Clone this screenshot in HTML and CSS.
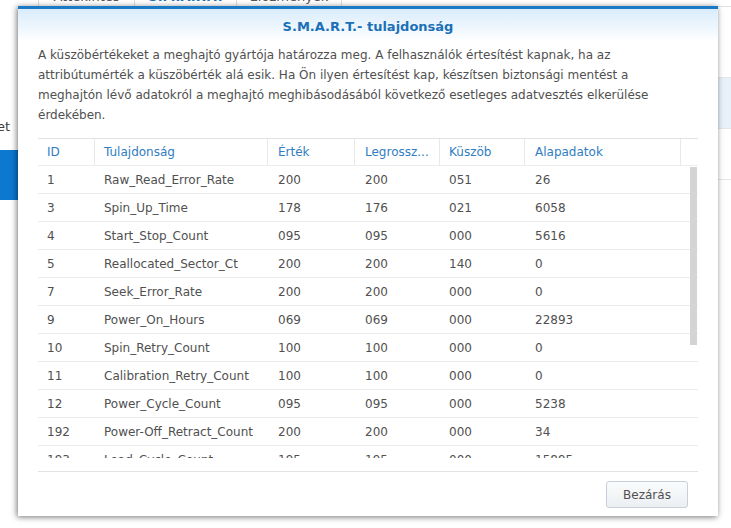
FILE: index.html
```html
<!DOCTYPE html>
<html lang="hu">

<head>
    <meta charset="UTF-8">
    <title>S.M.A.R.T.- tulajdonság</title>
    <link rel="stylesheet" href="styles.css">
</head>

<body>
    <div class="app">
        <div class="sidebar">
            <div class="side-item">Kötet</div>
            <div class="side-item selected"></div>
        </div>
        <div class="main">
            <div class="tabs">
                <div class="tab">Áttekintés</div>
                <div class="tab active">S.M.A.R.T.</div>
                <div class="tab">Előzmények</div>
            </div>
            <div class="list">
                <div class="list-row"></div>
                <div class="list-row hl"></div>
                <div class="list-row"></div>
            </div>
        </div>
    </div>

    <div class="dialog">
        <div class="dialog-head">S.M.A.R.T.- tulajdonság</div>
        <div class="dialog-body">
            <p class="intro">A küszöbértékeket a meghajtó gyártója határozza meg. A felhasználók értesítést kapnak, ha az
                attribútumérték a küszöbérték alá esik. Ha Ön ilyen értesítést kap, készítsen biztonsági mentést a
                meghajtón lévő adatokról a meghajtó meghibásodásából következő esetleges adatvesztés elkerülése
                érdekében.</p>

            <div class="grid">
                <div class="grid-row grid-head">
                    <div class="c c-id">ID</div>
                    <div class="c c-name">Tulajdonság</div>
                    <div class="c c-val">Érték</div>
                    <div class="c c-worst">Legrossz...</div>
                    <div class="c c-thr">Küszöb</div>
                    <div class="c c-raw">Alapadatok</div>
                    <div class="c c-gap"></div>
                </div>
                <div class="grid-body">
                    <div class="grid-row"><div class="c c-id">1</div><div class="c c-name">Raw_Read_Error_Rate</div><div class="c c-val">200</div><div class="c c-worst">200</div><div class="c c-thr">051</div><div class="c c-raw">26</div></div>
                    <div class="grid-row"><div class="c c-id">3</div><div class="c c-name">Spin_Up_Time</div><div class="c c-val">178</div><div class="c c-worst">176</div><div class="c c-thr">021</div><div class="c c-raw">6058</div></div>
                    <div class="grid-row"><div class="c c-id">4</div><div class="c c-name">Start_Stop_Count</div><div class="c c-val">095</div><div class="c c-worst">095</div><div class="c c-thr">000</div><div class="c c-raw">5616</div></div>
                    <div class="grid-row"><div class="c c-id">5</div><div class="c c-name">Reallocated_Sector_Ct</div><div class="c c-val">200</div><div class="c c-worst">200</div><div class="c c-thr">140</div><div class="c c-raw">0</div></div>
                    <div class="grid-row"><div class="c c-id">7</div><div class="c c-name">Seek_Error_Rate</div><div class="c c-val">200</div><div class="c c-worst">200</div><div class="c c-thr">000</div><div class="c c-raw">0</div></div>
                    <div class="grid-row"><div class="c c-id">9</div><div class="c c-name">Power_On_Hours</div><div class="c c-val">069</div><div class="c c-worst">069</div><div class="c c-thr">000</div><div class="c c-raw">22893</div></div>
                    <div class="grid-row"><div class="c c-id">10</div><div class="c c-name">Spin_Retry_Count</div><div class="c c-val">100</div><div class="c c-worst">100</div><div class="c c-thr">000</div><div class="c c-raw">0</div></div>
                    <div class="grid-row"><div class="c c-id">11</div><div class="c c-name">Calibration_Retry_Count</div><div class="c c-val">100</div><div class="c c-worst">100</div><div class="c c-thr">000</div><div class="c c-raw">0</div></div>
                    <div class="grid-row"><div class="c c-id">12</div><div class="c c-name">Power_Cycle_Count</div><div class="c c-val">095</div><div class="c c-worst">095</div><div class="c c-thr">000</div><div class="c c-raw">5238</div></div>
                    <div class="grid-row"><div class="c c-id">192</div><div class="c c-name">Power-Off_Retract_Count</div><div class="c c-val">200</div><div class="c c-worst">200</div><div class="c c-thr">000</div><div class="c c-raw">34</div></div>
                    <div class="grid-row"><div class="c c-id">193</div><div class="c c-name">Load_Cycle_Count</div><div class="c c-val">195</div><div class="c c-worst">195</div><div class="c c-thr">000</div><div class="c c-raw">15895</div></div>
                    <div class="grid-row"><div class="c c-id">194</div><div class="c c-name">Temperature_Celsius</div><div class="c c-val">114</div><div class="c c-worst">099</div><div class="c c-thr">000</div><div class="c c-raw">36</div></div>
                    <div class="scroll-thumb"></div>
                </div>
            </div>

            <div class="dialog-foot">
                <button type="button" class="close-button">Bezárás</button>
            </div>
        </div>
    </div>
</body>

</html>
```

FILE: styles.css
```css
body {
    margin: 0;
    font-family: "DejaVu Sans", Verdana, sans-serif;
    font-size: 12px;
    color: #505050;
    background-color: #fff;
    overflow: hidden;
}

/* application behind the dialog */

.app {
    display: flex;
    height: 528px;
}

.sidebar {
    width: 18px;
    padding-top: 117px;
    overflow: hidden;
    white-space: nowrap;
    direction: rtl;
}

.side-item {
    height: 20px;
    line-height: 20px;
    font-size: 13px;
    padding-right: 8px;
    color: #404040;
}

.side-item.selected {
    height: 50px;
    margin-top: 13px;
    background: #0c78d0;
}

.main {
    flex: 1;
    margin-top: -8px;
}

.tabs {
    display: flex;
    height: 14px;
    padding-left: 20px;
    border-bottom: 1px solid #e3e3e3;
}

.tab {
    width: 95px;
    text-align: center;
    border-left: 1px solid #dcdcdc;
    line-height: 10px;
    font-size: 13px;
    color: #555;
}

.tab.active {
    width: 101px;
    font-weight: bold;
    color: #1b6fb5;
}

.tab:last-child {
    width: 104px;
    border-right: 1px solid #dcdcdc;
}

.list {
    padding-top: 20px;
}

.list-row {
    height: 50px;
    border-bottom: 1px solid #e6e6e6;
}

.list-row.hl {
    background: #e8f1fa;
}

/* dialog */

.dialog {
    position: absolute;
    left: 18px;
    top: 6px;
    width: 700px;
    height: 510px;
    background: #fff;
    border-top: 3px solid #1a7ac6;
    box-sizing: border-box;
    box-shadow: -1px 1px 6px rgba(0, 0, 0, 0.55);
}

.dialog-head {
    height: 33px;
    padding-top: 3px;
    box-sizing: border-box;
    line-height: 30px;
    text-align: center;
    font-weight: bold;
    font-size: 13px;
    color: #1b70b8;
    background: linear-gradient(#d9ecfb, #fff);
}

.dialog-body {
    padding: 0 20px;
}

.intro {
    margin: 3px 40px 13px 0;
    line-height: 20px;
}

.grid {
    border-top: 1px solid #e2e2e2;
    border-bottom: 1px solid #e2e2e2;
    padding-bottom: 13px;
}

.grid-row {
    display: flex;
    height: 28px;
    line-height: 28px;
    border-bottom: 1px solid #ebebeb;
    box-sizing: border-box;
}

.grid-head {
    height: 27px;
    line-height: 27px;
    color: #2f7dc2;
}

.grid-head .c {
    border-right: 1px solid #e8e8e8;
}

.c {
    padding-left: 9px;
    box-sizing: border-box;
    white-space: nowrap;
    overflow: hidden;
}

.c-id { width: 57px; }
.c-name { width: 173px; }
.c-val { width: 87px; padding-left: 10px; }
.c-worst { width: 85px; padding-left: 10px; }
.c-thr { width: 85px; }
.c-raw { width: 156px; padding-left: 10px; }

.grid-head .c-gap {
    flex: 1;
    border-right: none;
}

.grid-body {
    position: relative;
    height: 292px;
    overflow: hidden;
}

.scroll-thumb {
    position: absolute;
    right: 1px;
    top: 1px;
    width: 7px;
    height: 178px;
    background: #d4d4d4;
}

.dialog-foot {
    display: flex;
    justify-content: flex-end;
    padding: 9px 10px 0 0;
}

.close-button {
    width: 82px;
    height: 27px;
    font-family: inherit;
    font-size: 12px;
    color: #505050;
    background: linear-gradient(#fafbfc, #eceff2);
    border: 1px solid #c7cfd8;
    border-radius: 3px;
    cursor: pointer;
}
```
